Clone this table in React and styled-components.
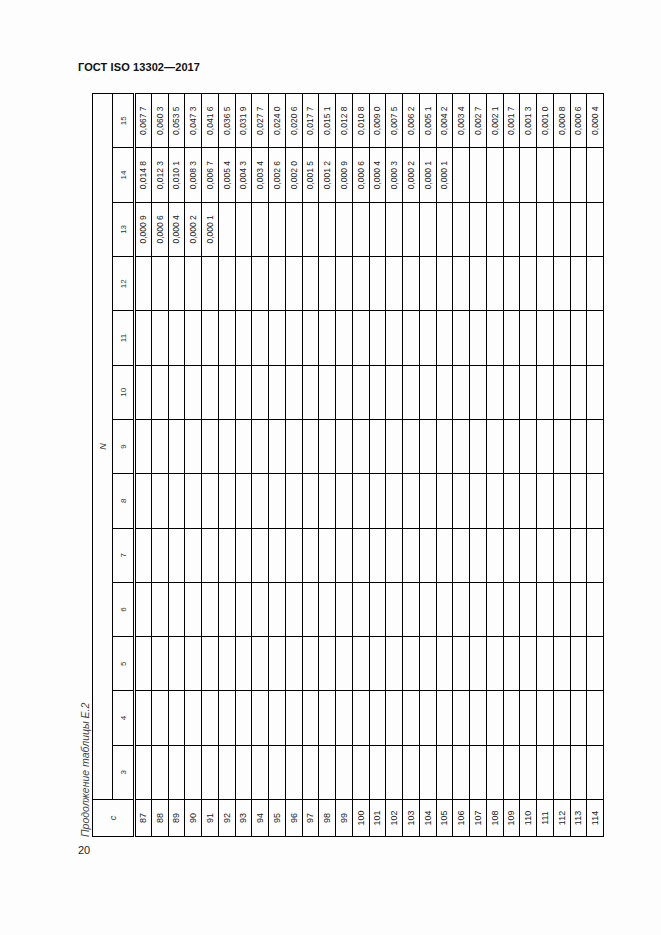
import React from "react";
import styled, { createGlobalStyle } from "styled-components";

const GlobalStyle = createGlobalStyle`
  html, body {
    margin: 0;
    padding: 0;
    background: #fdfdfd;
  }
  body {
    font-family: "Liberation Sans", Arial, sans-serif;
    color: #1a1a1a;
  }
`;

const col15 = [
  "0,067 7", "0,060 3", "0,053 5", "0,047 3", "0,041 6", "0,036 5", "0,031 9",
  "0,027 7", "0,024 0", "0,020 6", "0,017 7", "0,015 1", "0,012 8", "0,010 8",
  "0,009 0", "0,007 5", "0,006 2", "0,005 1", "0,004 2", "0,003 4", "0,002 7",
  "0,002 1", "0,001 7", "0,001 3", "0,001 0", "0,000 8", "0,000 6", "0,000 4",
];

const col14 = [
  "0,014 8", "0,012 3", "0,010 1", "0,008 3", "0,006 7", "0,005 4", "0,004 3",
  "0,003 4", "0,002 6", "0,002 0", "0,001 5", "0,001 2", "0,000 9", "0,000 6",
  "0,000 4", "0,000 3", "0,000 2", "0,000 1", "0,000 1",
];

const col13 = ["0,000 9", "0,000 6", "0,000 4", "0,000 2", "0,000 1"];

const headers = [3, 4, 5, 6, 7, 8, 9, 10, 11, 12, 13, 14, 15];

const rows = Array.from({ length: 28 }, (_, i) => ({
  c: 87 + i,
  values: headers.map((h) => {
    if (h === 15) return col15[i] || "";
    if (h === 14) return col14[i] || "";
    if (h === 13) return col13[i] || "";
    return "";
  }),
}));

const Page = styled.div`
  width: 661px;
  height: 935px;
  box-sizing: border-box;
  padding: 60px 0 0 78px;
`;

const RunningHead = styled.div`
  font-size: 11px;
  font-weight: bold;
  line-height: 14px;
  color: #111;
  letter-spacing: 0.1px;
`;

/* screen-sized slot for the turned (landscape) table */
const Sheet = styled.div`
  margin-top: 20px;
  width: 524px;
  height: 743px;
`;

const Turned = styled.div`
  width: 743px;
  height: 524px;
  transform-origin: top left;
  transform: rotate(-90deg) translateX(-100%);
  display: flex;
  flex-direction: column;
`;

const Caption = styled.div`
  height: 16px;
  font-size: 10.5px;
  font-style: italic;
  line-height: 14px;
  color: #444;
`;

const Table = styled.table`
  width: 743px;
  height: 508px;
  border-collapse: collapse;
  table-layout: fixed;
  border: 1px solid #000;
`;

const Col = styled.col`
  width: ${(p) => p.$w}px;
`;

const HeadCell = styled.th`
  border: 1px solid #000;
  border-bottom: ${(p) => (p.$last ? "3px double #000" : "1px solid #000")};
  font-weight: normal;
  font-size: ${(p) => (p.$italic ? 9 : 8)}px;
  font-style: ${(p) => (p.$italic ? "italic" : "normal")};
  color: #333;
  text-align: center;
  vertical-align: middle;
  padding: 0;
  height: ${(p) => p.$h}px;
`;

const Row = styled.tr`
  height: 16.75px;
`;

const NumCell = styled.td`
  border: 1px solid #000;
  font-size: 9px;
  color: #222;
  text-align: center;
  vertical-align: middle;
  padding: 0;
`;

const Cell = styled.td`
  border: 1px solid #000;
  font-size: 8.5px;
  color: #222;
  text-align: center;
  vertical-align: middle;
  padding: 0;
  white-space: nowrap;
`;

const PageNumber = styled.div`
  margin-top: 7px;
  font-size: 11px;
  line-height: 13px;
  color: #222;
`;

export default function App() {
  return (
    <>
      <GlobalStyle />
      <Page>
        <RunningHead>ГОСТ ISO 13302—2017</RunningHead>
        <Sheet>
          <Turned>
            <Caption>Продолжение таблицы Е.2</Caption>
            <Table>
              <colgroup>
                <Col $w={37} />
                {headers.map((h) => (
                  <Col key={h} $w={54.3} />
                ))}
              </colgroup>
              <thead>
                <tr>
                  <HeadCell rowSpan={2} $h={39} $last $italic>
                    c
                  </HeadCell>
                  <HeadCell colSpan={13} $h={19} $italic>
                    N
                  </HeadCell>
                </tr>
                <tr>
                  {headers.map((h) => (
                    <HeadCell key={h} $h={20} $last>
                      {h}
                    </HeadCell>
                  ))}
                </tr>
              </thead>
              <tbody>
                {rows.map((r) => (
                  <Row key={r.c}>
                    <NumCell>{r.c}</NumCell>
                    {r.values.map((v, j) => (
                      <Cell key={j}>{v}</Cell>
                    ))}
                  </Row>
                ))}
              </tbody>
            </Table>
          </Turned>
        </Sheet>
        <PageNumber>20</PageNumber>
      </Page>
    </>
  );
}
